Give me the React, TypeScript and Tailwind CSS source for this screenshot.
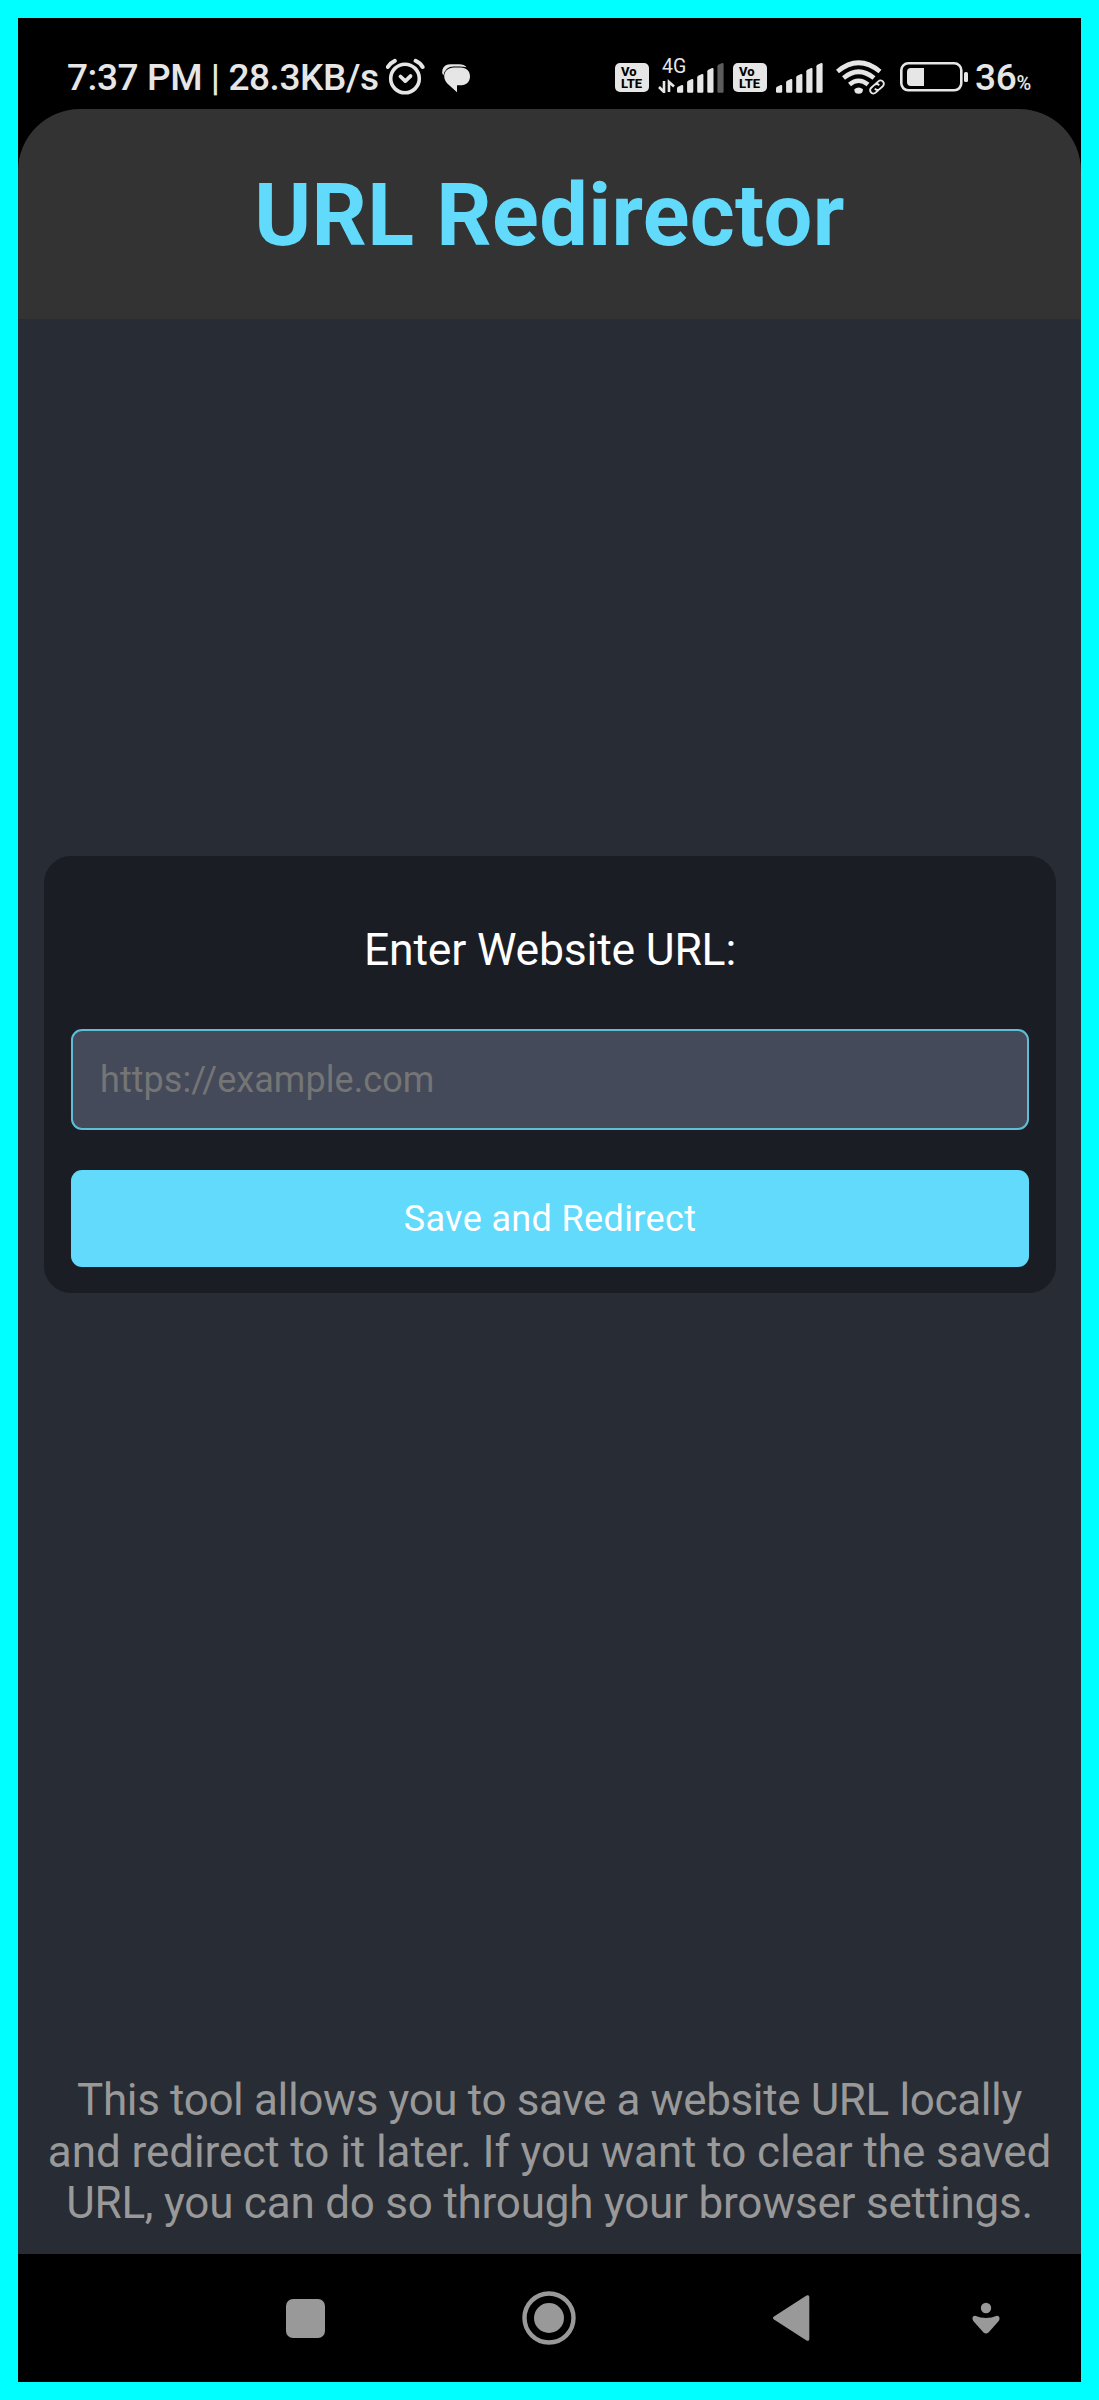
import React from "react";

function Alarm() {
  return (
    <svg className="h-[50px] w-[40px] shrink-0" viewBox="386 50 40 50" fill="none" stroke="#e6e6e6" strokeLinecap="round" strokeLinejoin="round">
      <circle cx="405" cy="78.5" r="14.3" strokeWidth="3.6" />
      <path d="M400.5 76.5l4.8 4.6 5.2-5" strokeWidth="3.8" />
      <path d="M387.8 67q2.5-4.2 7-6.2M415.600 60.8q5 2.400 7 6.200" strokeWidth="4" />
    </svg>
  );
}

function Chat() {
  return (
    <svg className="ml-[15px] h-[50px] w-[31px] shrink-0" viewBox="441 50 31 50">
      <path d="M443.300 75.500q-1.800-3-.8-6 1.500-5.200 8.500-5.200h8.300q5 0 7.300 3-3-.9-7-.9h-6q-8.300 0-10.300 9.100z" fill="#e6e6e6" />
      <path d="M454 67.500h6.500c6 0 9.500 3.800 9.500 8.800 0 5.400-3.600 9-8.500 9H457v6.900l-7.800-7c-3.200-2.600-5-5.600-5-8.900 0-5 4-8.800 9.800-8.800z" fill="#e6e6e6" />
    </svg>
  );
}

function Volte() {
  return (
    <div className="mt-[5px] flex h-[29px] w-[34px] shrink-0 flex-col justify-center rounded-[5px] bg-[#e6e6e6] pl-[6px] text-[13px] leading-[12px] font-extrabold text-black">
      <span>Vo</span>
      <span>LTE</span>
    </div>
  );
}

const TOPS = [85, 79, 74, 68, 63];

function Bars({ faded }: { faded: boolean }) {
  return (
    <svg className="h-[50px] w-[48px] shrink-0" viewBox="0 50 48 50">
      {TOPS.map((top, i) => (
        <path
          key={top}
          d={`M${i * 10.1} ${top + 3.2}q0-1 1-1.500l3.800-1.600q1.400-.4 1.400 1V91.500q0 1.200-1.200 1.200h-3.800q-1.200 0-1.200-1.200z`}
          fill={faded && i === 4 ? "#5c5c5c" : "#e6e6e6"}
        />
      ))}
    </svg>
  );
}

function Network() {
  return (
    <div className="ml-[9px] flex h-[50px] w-[19px] shrink-0 flex-col">
      <span className="mt-[7px] ml-[4px] text-[19.500px] leading-[19px] text-[#e6e6e6]">4G</span>
      <svg className="mt-[3px] h-[14px] w-[17px]" viewBox="658 79 17 14" fill="none" stroke="#e6e6e6" strokeWidth="2.600">
        <path d="M664 81v11l-5-5M669 92V82l5 4.500" />
      </svg>
    </div>
  );
}

function Wifi() {
  return (
    <svg className="ml-[12px] h-[50px] w-[50px] shrink-0" viewBox="836 50 50 50" fill="none" stroke="#e6e6e6">
      <path d="M837.500 71.500q21-17.500 42.500 0" strokeWidth="4.600" />
      <path d="M843.500 78q15-12.500 30.500 0" strokeWidth="4.600" />
      <path d="M849.500 84.500q9-7.500 18.500 0" strokeWidth="4.600" />
      <path d="M854.300 89.200q4.300-3.600 8.700 0 0 4.500-4.400 4.500t-4.300-4.500z" fill="#e6e6e6" stroke="none" />
      <g transform="rotate(-42 877 87)" strokeWidth="1.900">
        <path d="M876 90.300h-3.800a3.300 3.300 0 0 1 0-6.600h4.300q3.300 0 3.300 3.500" />
        <path d="M878 83.700h3.800a3.300 3.300 0 0 1 0 6.600h-4.300q-3.300 0-3.300-3.500" />
      </g>
    </svg>
  );
}

function Battery() {
  return (
    <svg className="ml-[13px] h-[50px] w-[69px] shrink-0" viewBox="899 50 69 50">
      <rect x="901.300" y="63.300" width="60" height="27" rx="7" fill="none" stroke="#e6e6e6" strokeWidth="2.600" />
      <path d="M911 68h13v18h-13q-4 0-4-4V72q0-4 4-4z" fill="#e6e6e6" />
      <rect x="964" y="72" width="4" height="10" rx="1.500" fill="#e6e6e6" />
    </svg>
  );
}

function StatusBar() {
  return (
    <div className="flex h-[91px] shrink-0 items-start bg-black pt-[32px] pl-[49px] text-[#e6e6e6]">
      <div className="mt-px w-[319px] text-[37px] leading-[53px] font-medium tracking-[-0.42px] whitespace-nowrap">
        <span>7:37 PM | 28.3KB/s</span>
      </div>
      <Alarm />
      <Chat />
      <div className="ml-[143px] flex items-center">
        <Volte />
        <Network />
        <Bars faded />
        <div className="ml-[8px] flex">
          <Volte />
        </div>
        <div className="ml-[8.500px]">
          <Bars faded={false} />
        </div>
      </div>
      <Wifi />
      <Battery />
      <div className="mt-px ml-[7.500px] flex items-baseline whitespace-nowrap">
        <span className="text-[37px] leading-[53px] font-medium tracking-[-0.3px]">36</span>
        <span className="text-[20px] font-medium">%</span>
      </div>
    </div>
  );
}

function NavBar() {
  return (
    <nav className="flex h-[128px] shrink-0 items-center bg-black pl-[268px]">
      <div className="h-[39px] w-[39px] rounded-[7px] bg-[#999]" />
      <svg className="ml-[197px] h-[54px] w-[54px]" viewBox="0 0 54 54" fill="#999">
        <circle cx="27" cy="27" r="24.500" fill="none" stroke="#999" strokeWidth="4.400" />
        <circle cx="27" cy="27" r="15" />
      </svg>
      <svg className="ml-[196px] h-[48px] w-[38px]" viewBox="0 0 38 48" fill="#999">
        <path d="M2 22.500 34.500 1.500Q37.300 .3 37.300 3v42q0 2.700-2.800 1.500L2 25.500q-2.200-1.500 0-3z" />
      </svg>
      <svg className="ml-[162px] h-[32px] w-[28px]" viewBox="0 0 28 32" fill="#999">
        <circle cx="14" cy="6" r="5.200" />
        <path d="M3 13.800q11 4.600 22 0 2.600 0 2.500 3 0 1.400-1 2.500L16.500 30.500q-2.500 2-5 0L1.500 19.300q-1-1.100-1-2.500-.1-3 2.500-3z" />
      </svg>
    </nav>
  );
}

export default function App() {
  return (
    <div className="flex h-[2400px] w-[1099px] flex-col border-[18px] border-[#00ffff] bg-black font-['Roboto',sans-serif]">
      <StatusBar />
      <header className="flex h-[210px] shrink-0 items-start justify-center rounded-t-[62px] bg-[#333] pt-[56px]">
        <h1 className="text-[86.500px] leading-[102px] font-bold tracking-[0.35px] whitespace-nowrap text-[#61dafb]">URL Redirector</h1>
      </header>
      <main className="flex min-h-0 flex-1 flex-col bg-[#282c34]">
        <form className="mx-[26px] mt-[537px] mr-[25px] flex h-[437px] shrink-0 flex-col rounded-[27px] bg-[#1b1d25] px-[27px]">
          <label htmlFor="url" className="mt-[68px] text-center text-[44.500px] leading-[53px] tracking-[-0.2px] whitespace-nowrap text-white">
            Enter Website URL:
          </label>
          <input
            id="url"
            type="url"
            placeholder="https://example.com"
            className="mt-[52px] h-[101px] rounded-[11px] border-2 border-[#61bdd6] bg-[#444a5a] px-[27px] text-[36px] tracking-[0.06px] text-white placeholder:text-[#757575]"
          />
          <button type="button" className="mt-[40px] h-[97px] rounded-[11px] bg-[#61dafb] text-[36px] tracking-[0.36px] text-white">
            Save and Redirect
          </button>
        </form>
        <footer className="mt-auto flex flex-col items-center pb-[25px] text-[44px] leading-[51.200px] whitespace-nowrap text-[#999]">
          <p className="tracking-[-0.37px]">This tool allows you to save a website URL locally</p>
          <p className="tracking-[-0.07px]">and redirect to it later. If you want to clear the saved</p>
          <p className="tracking-[-0.22px]">URL, you can do so through your browser settings.</p>
        </footer>
      </main>
      <NavBar />
    </div>
  );
}
